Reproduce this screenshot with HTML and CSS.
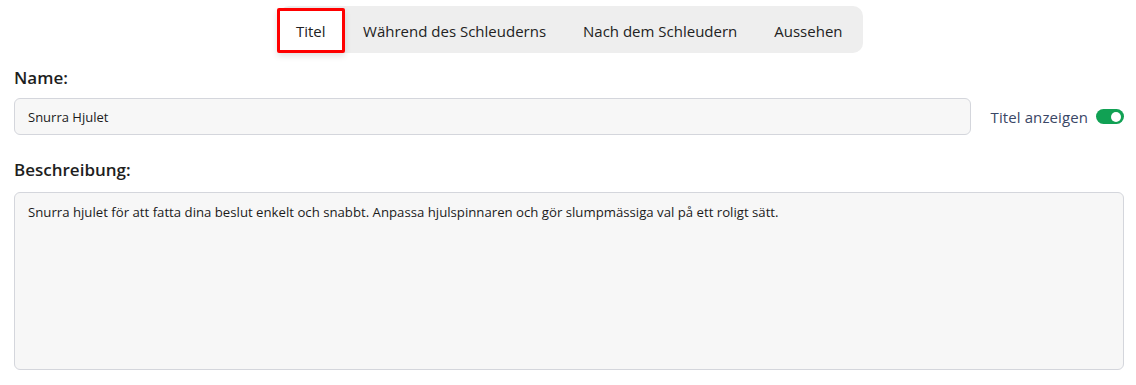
FILE: index.html
```html
<!DOCTYPE html>
<html lang="de">
<head>
<meta charset="utf-8">
<link rel="stylesheet" href="styles.css">
</head>
<body>
<div class="page">
  <nav class="tabs-wrap">
    <div class="tabs">
      <button class="tab active">Titel</button>
      <button class="tab">Während des Schleuderns</button>
      <button class="tab">Nach dem Schleudern</button>
      <button class="tab">Aussehen</button>
    </div>
  </nav>
  <label class="label name-label">Name:</label>
  <div class="name-row">
    <div class="input">Snurra Hjulet</div>
    <div class="toggle-wrap">
      <span class="toggle-text">Titel anzeigen</span>
      <span class="toggle"><span class="knob"></span></span>
    </div>
  </div>
  <label class="label desc-label">Beschreibung:</label>
  <div class="textarea">Snurra hjulet för att fatta dina beslut enkelt och snabbt. Anpassa hjulspinnaren och gör slumpmässiga val på ett roligt sätt.</div>
</div>
</body>
</html>
```
FILE: styles.css
```css
* { box-sizing: border-box; }
html, body { margin: 0; padding: 0; background: #fff; }
body {
  font-family: "Open Sans", "Noto Sans", sans-serif;
  color: #1f1f1f;
}
.page {
  padding: 6px 12px 0 14px;
}
.tabs-wrap {
  display: flex;
  justify-content: center;
}
.tabs {
  display: flex;
  background: #eeeeee;
  border-radius: 10px;
  padding: 2px 2px 0 0;
  height: 47px;
  margin-left: 4px;
}
.tab {
  font-family: inherit;
  font-size: 15px;
  color: #222;
  background: transparent;
  border: none;
  padding: 0 18.5px;
  height: 45px;
  cursor: pointer;
}
.tab.active {
  background: #fff;
  border: 3px solid #ff0000;
  border-radius: 2px;
  box-shadow: 0 3px 6px rgba(0,0,0,0.12);
  padding: 0 16px;
  margin-left: -2px;
}
.label {
  display: block;
  font-size: 17px;
  font-weight: 600;
  color: #1e1e1e;
}
.name-label {
  margin-top: 13px;
  line-height: 24px;
}
.name-row {
  display: flex;
  align-items: center;
  margin-top: 8px;
}
.input {
  flex: 1;
  height: 37px;
  background: #f7f7f7;
  border: 1px solid #d4d6dc;
  border-radius: 6px;
  font-size: 13px;
  padding: 0 13px;
  display: flex;
  align-items: center;
  color: #1b1b1b;
}
.toggle-wrap {
  display: flex;
  align-items: center;
  margin-left: 20px;
}
.toggle-text {
  font-size: 15px;
  color: #3a4766;
  letter-spacing: 0.1px;
}
.toggle {
  display: inline-flex;
  align-items: center;
  justify-content: flex-end;
  width: 28px;
  height: 15px;
  border-radius: 8px;
  background: #11a154;
  margin-left: 8px;
  padding: 0 3px;
}
.knob {
  width: 10px;
  height: 10px;
  border-radius: 50%;
  background: #fff;
}
.desc-label {
  margin-top: 23px;
  line-height: 24px;
}
.textarea {
  margin-top: 10px;
  height: 178px;
  background: #f7f7f7;
  border: 1px solid #d4d6dc;
  border-radius: 6px;
  font-size: 13.2px;
  padding: 10px 13px;
  color: #1b1b1b;
}
```
